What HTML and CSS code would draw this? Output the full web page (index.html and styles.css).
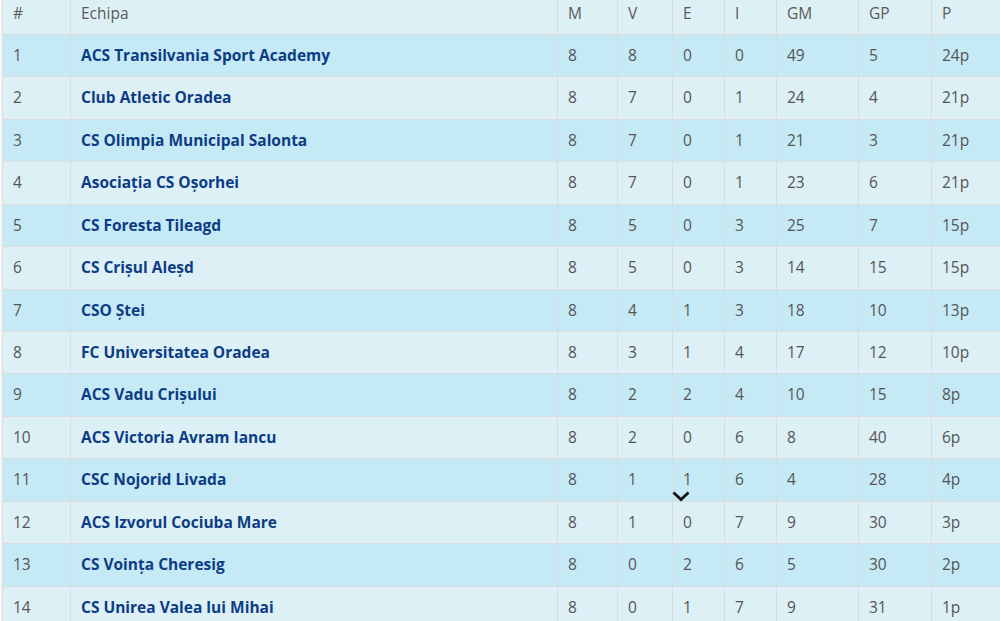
FILE: index.html
```html
<!DOCTYPE html>
<html lang="ro">
<head>
<meta charset="utf-8">
<title>Clasament</title>
<link rel="stylesheet" href="styles.css">
</head>
<body>
<div class="wrap">
<table class="standings">
<colgroup>
<col class="c-pos"><col class="c-team"><col class="c-m"><col class="c-v"><col class="c-e"><col class="c-i"><col class="c-gm"><col class="c-gp"><col class="c-p">
</colgroup>
<thead>
<tr><th>#</th><th>Echipa</th><th>M</th><th>V</th><th>E</th><th>I</th><th>GM</th><th>GP</th><th>P</th></tr>
</thead>
<tbody>
<tr><td>1</td><td class="team">ACS Transilvania Sport Academy</td><td>8</td><td>8</td><td>0</td><td>0</td><td>49</td><td>5</td><td>24p</td></tr>
<tr><td>2</td><td class="team">Club Atletic Oradea</td><td>8</td><td>7</td><td>0</td><td>1</td><td>24</td><td>4</td><td>21p</td></tr>
<tr><td>3</td><td class="team">CS Olimpia Municipal Salonta</td><td>8</td><td>7</td><td>0</td><td>1</td><td>21</td><td>3</td><td>21p</td></tr>
<tr><td>4</td><td class="team">Asociația CS Oșorhei</td><td>8</td><td>7</td><td>0</td><td>1</td><td>23</td><td>6</td><td>21p</td></tr>
<tr><td>5</td><td class="team">CS Foresta Tileagd</td><td>8</td><td>5</td><td>0</td><td>3</td><td>25</td><td>7</td><td>15p</td></tr>
<tr><td>6</td><td class="team">CS Crișul Aleșd</td><td>8</td><td>5</td><td>0</td><td>3</td><td>14</td><td>15</td><td>15p</td></tr>
<tr><td>7</td><td class="team">CSO Ștei</td><td>8</td><td>4</td><td>1</td><td>3</td><td>18</td><td>10</td><td>13p</td></tr>
<tr><td>8</td><td class="team">FC Universitatea Oradea</td><td>8</td><td>3</td><td>1</td><td>4</td><td>17</td><td>12</td><td>10p</td></tr>
<tr><td>9</td><td class="team">ACS Vadu Crișului</td><td>8</td><td>2</td><td>2</td><td>4</td><td>10</td><td>15</td><td>8p</td></tr>
<tr><td>10</td><td class="team">ACS Victoria Avram Iancu</td><td>8</td><td>2</td><td>0</td><td>6</td><td>8</td><td>40</td><td>6p</td></tr>
<tr><td>11</td><td class="team">CSC Nojorid Livada</td><td>8</td><td>1</td><td>1</td><td>6</td><td>4</td><td>28</td><td>4p</td></tr>
<tr><td>12</td><td class="team">ACS Izvorul Cociuba Mare</td><td>8</td><td>1</td><td>0</td><td>7</td><td>9</td><td>30</td><td>3p</td></tr>
<tr><td>13</td><td class="team">CS Voința Cheresig</td><td>8</td><td>0</td><td>2</td><td>6</td><td>5</td><td>30</td><td>2p</td></tr>
<tr><td>14</td><td class="team">CS Unirea Valea lui Mihai</td><td>8</td><td>0</td><td>1</td><td>7</td><td>9</td><td>31</td><td>1p</td></tr>
</tbody>
</table>
<svg class="chevron" width="18" height="11" viewBox="0 0 18 11" aria-hidden="true"><path d="M2.5 2.5 L9 8.5 L15.5 2.5" fill="none" stroke="#111" stroke-width="2.8" stroke-linecap="square"/></svg>
</div>
</body>
</html>
```
FILE: styles.css
```css
html, body {
  margin: 0;
  padding: 0;
  background: #f4f6f7;
  overflow: hidden;
}
.wrap {
  position: relative;
  padding-left: 2px;
  width: 998px;
  height: 621px;
  overflow: hidden;
}
.standings {
  border-collapse: collapse;
  width: 998px;
  table-layout: fixed;
  font-family: "Open Sans", "Liberation Sans", sans-serif;
  font-size: 15.5px;
  line-height: 21.43px;
  color: #555;
}
.c-pos { width: 68px; }
.c-team { width: 487px; }
.c-m { width: 60px; }
.c-v { width: 55px; }
.c-e { width: 52px; }
.c-i { width: 52px; }
.c-gm { width: 82px; }
.c-gp { width: 73px; }
.c-p { width: 69px; }
.standings th,
.standings td {
  border: 1px solid #dcdcdc;
  text-align: left;
  vertical-align: middle;
  padding: 10px 10px;
  white-space: nowrap;
}
.standings th:last-child,
.standings td:last-child {
  border-right: none;
}
.standings thead th {
  font-weight: 400;
  color: #5a5a5a;
  padding-top: 3px;
  padding-bottom: 9.5px;
  background: #ddf0f6;
  border-top: none;
}
.standings tbody tr:nth-child(odd) td { background: #c5eaf5; }
.standings tbody tr:nth-child(even) td { background: #dcf0f6; }
.standings td.team {
  font-weight: 700;
  color: #0d3c84;
}
.chevron {
  position: absolute;
  left: 672px;
  top: 491px;
}
```
